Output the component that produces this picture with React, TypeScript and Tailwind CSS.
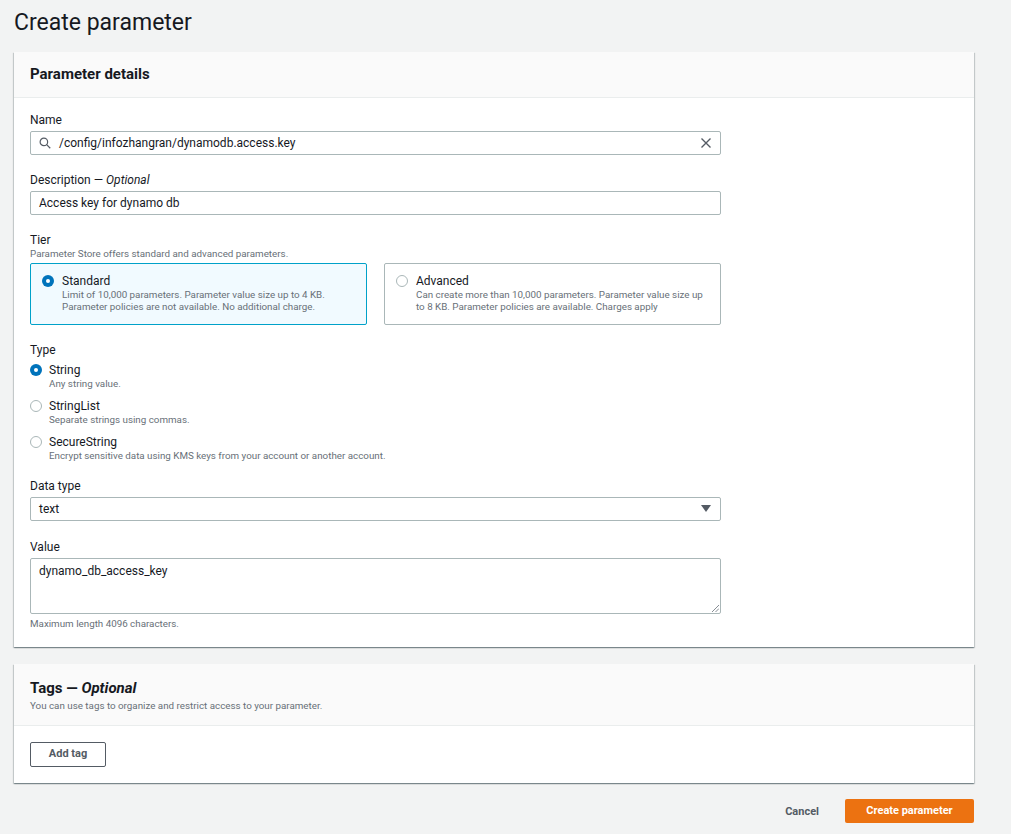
import React from "react";

const font = { fontFamily: "Roboto, 'Noto Sans', Arial, sans-serif" };

const cardShadow =
  "shadow-[0_1px_1px_0_rgba(0,28,36,0.3),1px_1px_1px_0_rgba(0,28,36,0.15),-1px_1px_1px_0_rgba(0,28,36,0.15)]";

function Radio({ checked }: { checked?: boolean }) {
  if (checked) {
    return (
      <span className="flex h-[12px] w-[12px] shrink-0 items-center justify-center rounded-full bg-[#0073bb]">
        <span className="block h-[4px] w-[4px] rounded-full bg-white" />
      </span>
    );
  }
  return <span className="block h-[12px] w-[12px] shrink-0 rounded-full border border-[#aab7b8] bg-white" />;
}

function Label({ children }: { children: React.ReactNode }) {
  return (
    <div className="relative top-[1px] mb-[4px] h-[16px] text-[12px] leading-[16px] text-[#16191f]">{children}</div>
  );
}

const TYPES = [
  { name: "String", desc: "Any string value.", checked: true },
  { name: "StringList", desc: "Separate strings using commas." },
  { name: "SecureString", desc: "Encrypt sensitive data using KMS keys from your account or another account." },
];

export default function App() {
  return (
    <div className="min-h-[834px] w-[1011px] bg-[#f2f3f3] text-[#16191f]" style={font}>
      <div className="flex h-[52px] items-start px-[14px] pt-[8px]">
        <h1 className="text-[23px] leading-[30px] text-[#16191f]">Create parameter</h1>
      </div>

      <div className="w-[960px] pl-[14px] box-content">
        {/* Parameter details */}
        <div className={`bg-white ${cardShadow}`}>
          <div className="flex h-[46px] items-center border-b border-[#eaeded] bg-[#fafafa] px-[16px]">
            <h2 className="text-[15px] font-bold text-[#16191f]">Parameter details</h2>
          </div>

          <div className="px-[16px] pt-[13px] pb-[17px]">
            <Label>Name</Label>
            <div className="flex h-[24px] w-[691px] items-center rounded-[2px] border border-[#aab7b8] px-[8px]">
              <svg width="12" height="12" viewBox="0 0 16 16" fill="none" stroke="#545b64" strokeWidth="1.6">
                <circle cx="6.5" cy="6.5" r="5" />
                <path d="M10.2 10.2 L15 15" />
              </svg>
              <span className="ml-[8px] flex-1 text-[12px] text-[#16191f]">/config/infozhangran/dynamodb.access.key</span>
              <svg width="12" height="12" viewBox="0 0 16 16" fill="none" stroke="#545b64" strokeWidth="1.8">
                <path d="M2 2 L14 14 M14 2 L2 14" />
              </svg>
            </div>

            <div className="mt-[16px]">
              <Label>
                Description — <i>Optional</i>
              </Label>
              <div className="flex h-[24px] w-[691px] items-center rounded-[2px] border border-[#aab7b8] px-[8px] text-[12px]">
                Access key for dynamo db
              </div>
            </div>

            <div className="mt-[16px]">
              <div className="relative top-[1px] h-[16px] text-[12px] leading-[16px]">Tier</div>
              <div className="relative top-[1px] h-[12px] text-[9.8px] leading-[12px] text-[#687078]">
                Parameter Store offers standard and advanced parameters.
              </div>
              <div className="mt-[4px] flex w-[691px] gap-[17px]">
                <div className="flex h-[62px] flex-1 gap-[8px] rounded-[2px] border border-[#00a1c9] bg-[#f1faff] px-[11px] pt-[9px]">
                  <div className="pt-[2px]">
                    <Radio checked />
                  </div>
                  <div>
                    <div className="text-[12px] leading-[16px]">Standard</div>
                    <div className="text-[9.8px] leading-[12px] text-[#687078]">
                      Limit of 10,000 parameters. Parameter value size up to 4 KB.
                      <br />
                      Parameter policies are not available. No additional charge.
                    </div>
                  </div>
                </div>
                <div className="flex h-[62px] flex-1 gap-[8px] rounded-[2px] border border-[#aab7b8] bg-white px-[11px] pt-[9px]">
                  <div className="pt-[2px]">
                    <Radio />
                  </div>
                  <div>
                    <div className="text-[12px] leading-[16px]">Advanced</div>
                    <div className="text-[9.8px] leading-[12px] text-[#687078]">
                      Can create more than 10,000 parameters. Parameter value size up
                      <br />
                      to 8 KB. Parameter policies are available. Charges apply
                    </div>
                  </div>
                </div>
              </div>
            </div>

            <div className="mt-[16px]">
              <Label>Type</Label>
              <div className="flex flex-col gap-[8px]">
                {TYPES.map((t) => (
                  <div key={t.name} className="relative top-[1px] flex gap-[7px]">
                    <div className="pt-[2px]">
                      <Radio checked={t.checked} />
                    </div>
                    <div>
                      <div className="text-[12px] leading-[16px]">{t.name}</div>
                      <div className="text-[9.8px] leading-[12px] text-[#687078]">{t.desc}</div>
                    </div>
                  </div>
                ))}
              </div>
            </div>

            <div className="mt-[16px]">
              <Label>Data type</Label>
              <div className="flex h-[24px] w-[691px] items-center rounded-[2px] border border-[#aab7b8] pl-[8px] pr-[9px] text-[12px]">
                <span className="flex-1">text</span>
                <svg width="10" height="8" viewBox="0 0 10 8">
                  <path d="M0 0 H10 L5 7 Z" fill="#545b64" />
                </svg>
              </div>
            </div>

            <div className="mt-[17px]">
              <Label>Value</Label>
              <div className="relative h-[56px] w-[691px] rounded-[2px] border border-[#aab7b8] px-[8px] pt-[4px] text-[12px] leading-[16px]">
                dynamo_db_access_key
                <svg className="absolute bottom-[1px] right-[1px]" width="8" height="8" viewBox="0 0 8 8" stroke="#687078" strokeWidth="0.8">
                  <path d="M1 8 L8 1 M4.5 8 L8 4.5" />
                </svg>
              </div>
              <div className="mt-[4px] text-[9.8px] leading-[12px] text-[#687078]">Maximum length 4096 characters.</div>
            </div>
          </div>
        </div>

        {/* Tags */}
        <div className={`mt-[17px] bg-white ${cardShadow}`}>
          <div className="h-[62px] border-b border-[#eaeded] bg-[#fafafa] px-[16px] pt-[14px]">
            <h2 className="text-[15px] font-bold leading-[20px]">
              Tags — <i>Optional</i>
            </h2>
            <div className="mt-[2px] text-[9.8px] leading-[12px] text-[#687078]">
              You can use tags to organize and restrict access to your parameter.
            </div>
          </div>
          <div className="px-[16px] pt-[16px] pb-[16px]">
            <button className="flex h-[25px] w-[76px] items-center justify-center rounded-[2px] border border-[#545b64] bg-white text-[11px] font-bold text-[#545b64]">
              Add tag
            </button>
          </div>
        </div>

        {/* Footer */}
        <div className="mt-[16px] flex items-center justify-end gap-[26px]">
          <button className="relative top-[1px] text-[11px] font-bold text-[#545b64]">Cancel</button>
          <button className="flex h-[24px] w-[129px] items-center justify-center rounded-[2px] bg-[#ec7211] text-[11px] font-bold text-white">
            Create parameter
          </button>
        </div>
      </div>
    </div>
  );
}
